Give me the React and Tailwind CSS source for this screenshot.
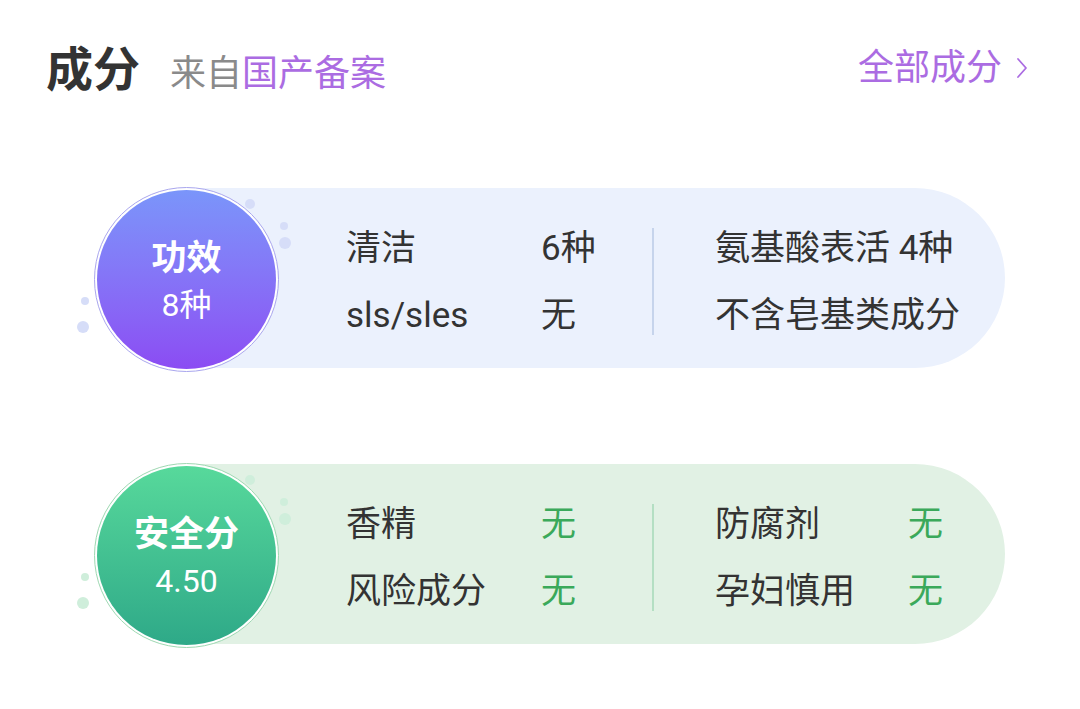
import React from "react";

const FONT = { fontFamily: 'Roboto, "Noto Sans CJK SC", "Noto Sans", sans-serif' };

const CARDS = [
  {
    id: "effect",
    title: "功效",
    value: "8种",
    circle: "bg-gradient-to-b from-[#7a95fa] to-[#8b4bf3]",
    ring: "border-[#a9a6ee]",
    dot: "bg-[#d6ddf8]",
    pill: "bg-[#ebf1fd]",
    divider: "bg-[#c6d4ec]",
    left: [
      ["清洁", "6种"],
      ["sls/sles", "无"],
    ],
    right: [["氨基酸表活 4种"], ["不含皂基类成分"]],
    valueColor: "text-[#333333]",
  },
  {
    id: "safe",
    title: "安全分",
    value: "4.50",
    circle: "bg-gradient-to-b from-[#57d99b] to-[#2ea988]",
    ring: "border-[#9ed8b2]",
    dot: "bg-[#cfeedb]",
    pill: "bg-[#e1f1e4]",
    divider: "bg-[#b4dfc3]",
    left: [
      ["香精", "无"],
      ["风险成分", "无"],
    ],
    right: [
      ["防腐剂", "无"],
      ["孕妇慎用", "无"],
    ],
    valueColor: "text-[#3aa95a]",
  },
];

function ScoreCard({ card }) {
  return (
    <div className="relative flex items-start">
      {/* decorative dots */}
      <span className={`absolute left-[151px] top-[12px] h-[10px] w-[10px] rounded-full ${card.dot}`} />
      <span className={`absolute left-[186px] top-[35px] h-[8px] w-[8px] rounded-full ${card.dot}`} />
      <span className={`absolute left-[185px] top-[50px] h-[12px] w-[12px] rounded-full ${card.dot}`} />
      <span className={`absolute left-[-13px] top-[110px] h-[8px] w-[8px] rounded-full ${card.dot}`} />
      <span className={`absolute left-[-17px] top-[134px] h-[12px] w-[12px] rounded-full ${card.dot}`} />

      <div className={`relative z-10 flex h-[185px] w-[185px] shrink-0 items-center justify-center rounded-full border ${card.ring} bg-white p-[2px]`}>
        <div className={`flex h-full w-full flex-col items-center justify-center rounded-full ${card.circle} pt-[4px] text-white`}>
          <span className="text-[35px] font-bold leading-[46px]">{card.title}</span>
          <span className="text-[32px] leading-[46px]">{card.value}</span>
        </div>
      </div>

      <div className={`ml-[-92px] mt-[1px] flex h-[180px] flex-1 items-center rounded-r-full ${card.pill} pl-[159px] pt-[7px] text-[35px] text-[#333333]`}>
        <div className="flex w-[306px] flex-col gap-[22px]">
          {card.left.map(([k, v]) => (
            <div key={k} className="flex leading-[45px]">
              <span className="w-[195px]">{k}</span>
              <span className={card.valueColor}>{v}</span>
            </div>
          ))}
        </div>
        <div className={`mr-[61px] h-[107px] w-[2px] ${card.divider}`} />
        <div className="flex flex-col gap-[22px]">
          {card.right.map(([k, v]) => (
            <div key={k} className="flex whitespace-nowrap leading-[45px]">
              <span className={v ? "w-[193px]" : ""}>{k}</span>
              {v && <span className={card.valueColor}>{v}</span>}
            </div>
          ))}
        </div>
      </div>
    </div>
  );
}

export default function App() {
  return (
    <div className="h-[709px] w-[1080px] bg-white" style={FONT}>
      <header className="flex items-start justify-between pl-[46px] pr-[52px] pt-[42px]">
        <div className="flex items-baseline">
          <h1 className="text-[47px] font-bold leading-[56px] text-[#333333]">成分</h1>
          <p className="ml-[30px] text-[36px] leading-[56px] text-[#8a8a8a]">
            来自<span className="text-[#ab6ce2]">国产备案</span>
          </p>
        </div>
        <button className="mt-[6px] flex items-center gap-[14px] text-[36px] leading-[40px] text-[#ab6ce2]">
          全部成分
          <svg width="12" height="22" viewBox="0 0 12 22" fill="none" stroke="#ab6ce2" strokeWidth="1.8" strokeLinecap="round" strokeLinejoin="round">
            <path d="M2 2l8 9-8 9" />
          </svg>
        </button>
      </header>

      <main className="flex flex-col gap-[91px] pl-[94px] pr-[75px] pt-[85px]">
        {CARDS.map((c) => (
          <ScoreCard key={c.id} card={c} />
        ))}
      </main>
    </div>
  );
}
